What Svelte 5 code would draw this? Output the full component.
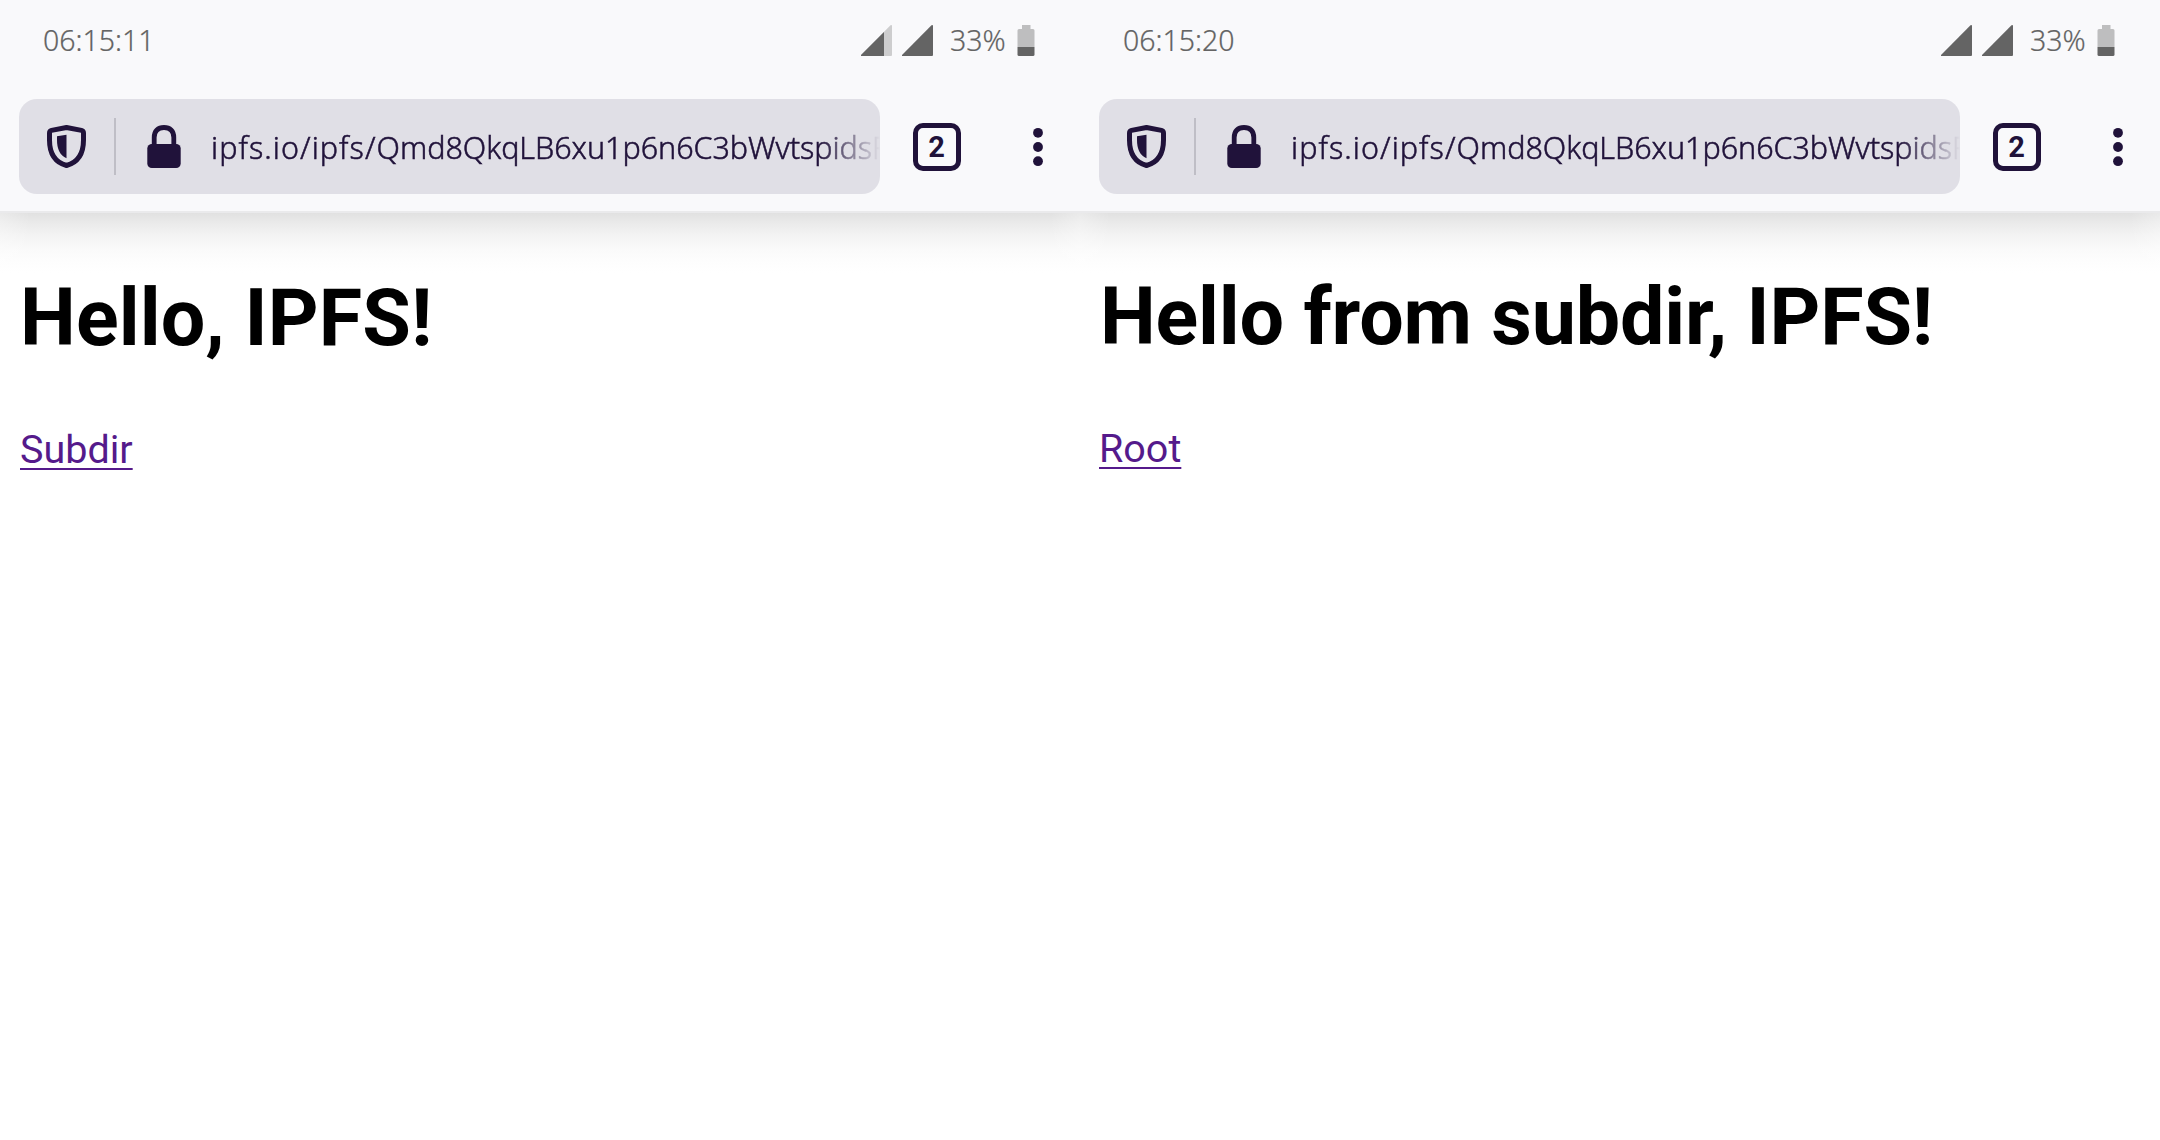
<script>
  const screens = [
    { time: '06:15:11', title: 'Hello, IPFS!', link: 'Subdir', weak: true, variant: 'root' },
    { time: '06:15:20', title: 'Hello from subdir, IPFS!', link: 'Root', weak: false, variant: 'sub' }
  ];
</script>

<main>
  {#each screens as s}
    <section class="phone {s.variant}">
      <header>
        <div class="status">
          <span class="time">{s.time}</span>
          <svg class="signal" width="31" height="31" viewBox="0 0 31 31">
            {#if s.weak}
              <path d="M0 31V30L29.5 0.3Q31 -0.5 31 1V30Q31 31 30 31Z" fill="#cdcdce" />
              <path d="M0 31V30L23 7V31Z" fill="#646464" />
            {:else}
              <path d="M0 31V30L29.5 0.3Q31 -0.5 31 1V30Q31 31 30 31Z" fill="#646464" />
            {/if}
          </svg>
          <svg class="signal second" width="31" height="31" viewBox="0 0 31 31">
            <path d="M0 31V30L29.5 0.3Q31 -0.5 31 1V30Q31 31 30 31Z" fill="#646464" />
          </svg>
          <span class="percent">33%</span>
          <svg class="battery" width="18" height="31" viewBox="0 0 18 31">
            <path d="M0.5 22V5.5Q0.5 4 2 4H5V0H13.500V4H16Q17.500 4 17.500 5.500V22Z" fill="#bebebf" />
            <path d="M0.500 22H17.500V29.500Q17.500 31 16 31H2Q0.500 31 0.500 29.500Z" fill="#646464" />
          </svg>
        </div>
        <div class="toolbar">
          <div class="address">
            <svg class="shield" width="39" height="43" viewBox="0 0 39 43">
              <path d="M4.500 5.400L19.500 2.500L34.500 5.400Q36.500 5.900 36.500 8V15C36.500 29 30.500 37.500 19.500 40.500C8.500 37.500 2.500 29 2.500 15V8Q2.500 5.900 4.500 5.400Z" fill="none" stroke="#20123a" stroke-width="5" stroke-linejoin="round" />
              <path d="M10 11.200L19.500 9.700V33.300C13 30.500 10 24 10 15Z" fill="#20123a" />
            </svg>
            <span class="divider"></span>
            <svg class="lock" width="34" height="43" viewBox="0 0 34 43">
              <path d="M7.200 22V12.500C7.200 6 11 2.500 17 2.500S26.800 6 26.800 12.500V22" fill="none" stroke="#20123a" stroke-width="4.800" />
              <rect x="0.300" y="19" width="33.400" height="24" rx="4.500" fill="#20123a" />
            </svg>
            <span class="url"><span class="base">ipfs.io/ipfs/</span>Qmd8QkqLB6xu1p6n6C3bWvtspidsF</span>
          </div>
          <div class="tabs">2</div>
          <svg class="menu" width="10" height="40" viewBox="0 0 10 40">
            <circle cx="5" cy="5.800" r="4.900" />
            <circle cx="5" cy="20" r="4.900" />
            <circle cx="5" cy="34.200" r="4.900" />
          </svg>
        </div>
      </header>
      <article>
        <h1>{s.title}</h1>
        <a href="#top">{s.link}</a>
      </article>
    </section>
  {/each}
</main>

<style>
  :global(body) { background: #fff; }
  main { display: flex; width: 2160px; height: 1140px; overflow: hidden; background: #fff; }
  .phone { width: 1080px; height: 1140px; overflow: hidden; }
  header {
    box-sizing: border-box;
    height: 213px;
    background: #f9f9fb;
    border-bottom: 2px solid #eaeaec;
    font-family: "Noto Sans", "Open Sans", sans-serif;
  }
  .status {
    display: flex;
    align-items: flex-start;
    box-sizing: border-box;
    height: 99px;
    padding: 25px 45px 0 43px;
    color: #646464;
    font-size: 28.500px;
    font-weight: 300;
    line-height: 31px;
    -webkit-text-stroke: 0.2px #646464;
  }
  .time { flex: 1; }
  .second { margin-left: 10px; }
  .percent { width: 67px; margin-left: 17px; white-space: nowrap; }
  .toolbar { display: flex; align-items: center; height: 95px; padding-left: 19px; }
  .address {
    display: flex;
    align-items: center;
    box-sizing: border-box;
    width: 861px;
    height: 95px;
    padding-left: 28px;
    border-radius: 18px;
    background: #e0dfe6;
    overflow: hidden;
  }
  svg { display: block; flex: none; }
  .divider { flex: none; width: 2px; height: 57px; margin-left: 28px; background: #bfbec6; }
  .lock { margin-left: 31px; }
  .url {
    flex: 1;
    margin-left: 30px;
    overflow: hidden;
    white-space: nowrap;
    color: #20123a;
    font-size: 30.500px;
    font-weight: 300;
    -webkit-text-stroke: 0.5px #20123a;
    letter-spacing: -0.05px;
    line-height: 48px;
    -webkit-mask-image: linear-gradient(to right, #000 calc(100% - 60px), transparent);
    mask-image: linear-gradient(to right, #000 calc(100% - 60px), transparent);
  }
  .base { letter-spacing: 1.05px; }
  .tabs {
    box-sizing: border-box;
    width: 48px;
    height: 48px;
    margin-left: 32.500px;
    border: 5.500px solid #20123a;
    border-radius: 10px;
    color: #20123a;
    font: 700 29px/38px Roboto, sans-serif;
    text-align: center;
  }
  .menu { margin-left: 72px; fill: #20123a; }
  article {
    display: flow-root;
    padding: 0 20px;
    font-family: Roboto, sans-serif;
    background:
      linear-gradient(to right, rgba(255, 255, 255, 0.3), transparent 30px calc(100% - 30px), rgba(255, 255, 255, 0.3)) top / 100% 60px no-repeat,
      linear-gradient(#e1e1e1, #ebebeb 11px, #f4f4f4 24px, #fafafa 37px, #fdfdfd 48px, #fff 60px) top / 100% 60px no-repeat;
  }
  h1 { margin: 58px 0 61px; font-size: 79px; font-weight: 700; line-height: 94px; letter-spacing: 0.1px; color: #000; white-space: nowrap; }
  a {
    display: inline-block;
    color: #551a8b;
    font-size: 39.500px;
    line-height: 47px;
    text-decoration-thickness: 2px;
    text-underline-offset: 5px;
  }
  .sub article { padding-left: 19px; }
  .sub h1 { margin: 57px 0 60.500px 1px; letter-spacing: -0.17px; }
</style>
